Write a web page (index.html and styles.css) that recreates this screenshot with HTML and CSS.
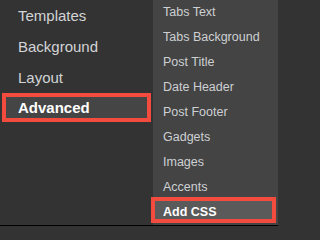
FILE: index.html
```html
<!DOCTYPE html>
<html>
<head>
<meta charset="utf-8">
<link rel="stylesheet" href="styles.css">
</head>
<body>
<div class="menu">
  <ul class="main">
    <li class="main-item">Templates</li>
    <li class="main-item">Background</li>
    <li class="main-item">Layout</li>
    <li class="main-item active">Advanced</li>
  </ul>
  <ul class="sub">
    <li class="sub-item">Tabs Text</li>
    <li class="sub-item">Tabs Background</li>
    <li class="sub-item">Post Title</li>
    <li class="sub-item">Date Header</li>
    <li class="sub-item">Post Footer</li>
    <li class="sub-item">Gadgets</li>
    <li class="sub-item">Images</li>
    <li class="sub-item">Accents</li>
    <li class="sub-item active"><span class="label">Add CSS</span></li>
  </ul>
</div>
</body>
</html>
```
FILE: styles.css
```css
html, body {
  margin: 0;
  padding: 0;
  background: #333333;
}
body {
  width: 278px;
  height: 226px;
  overflow: hidden;
  font-family: "Liberation Sans", Arial, sans-serif;
}
.menu {
  display: flex;
  height: 225px;
  border-bottom: 1px solid #000;
}
ul {
  list-style: none;
  margin: 0;
  padding: 0;
}
.main {
  width: 153px;
  flex: none;
}
.main-item {
  height: 31px;
  line-height: 31px;
  padding-left: 18px;
  font-size: 15px;
  color: #d2d4d6;
}
.main-item.active {
  margin-left: 2px;
  width: 149px;
  height: 29px;
  line-height: 22px;
  box-sizing: border-box;
  padding-left: 12px;
  border: 4px solid #f34b3e;
  background: #454545;
  color: #ffffff;
  font-weight: bold;
}
.sub {
  flex: 1;
  background: #444444;
}
.sub-item {
  position: relative;
  height: 25px;
  line-height: 25px;
  padding-left: 10px;
  font-size: 12.5px;
  color: #cdd0d3;
}
.sub-item.active {
  color: #ffffff;
  font-weight: bold;
}
.sub-item.active::after {
  content: "";
  position: absolute;
  left: -2px;
  right: 2px;
  top: -3px;
  bottom: 2px;
  border: 4px solid #f34b3e;
  background: #5a5a5a;
}
.label {
  position: relative;
  z-index: 1;
}
```
